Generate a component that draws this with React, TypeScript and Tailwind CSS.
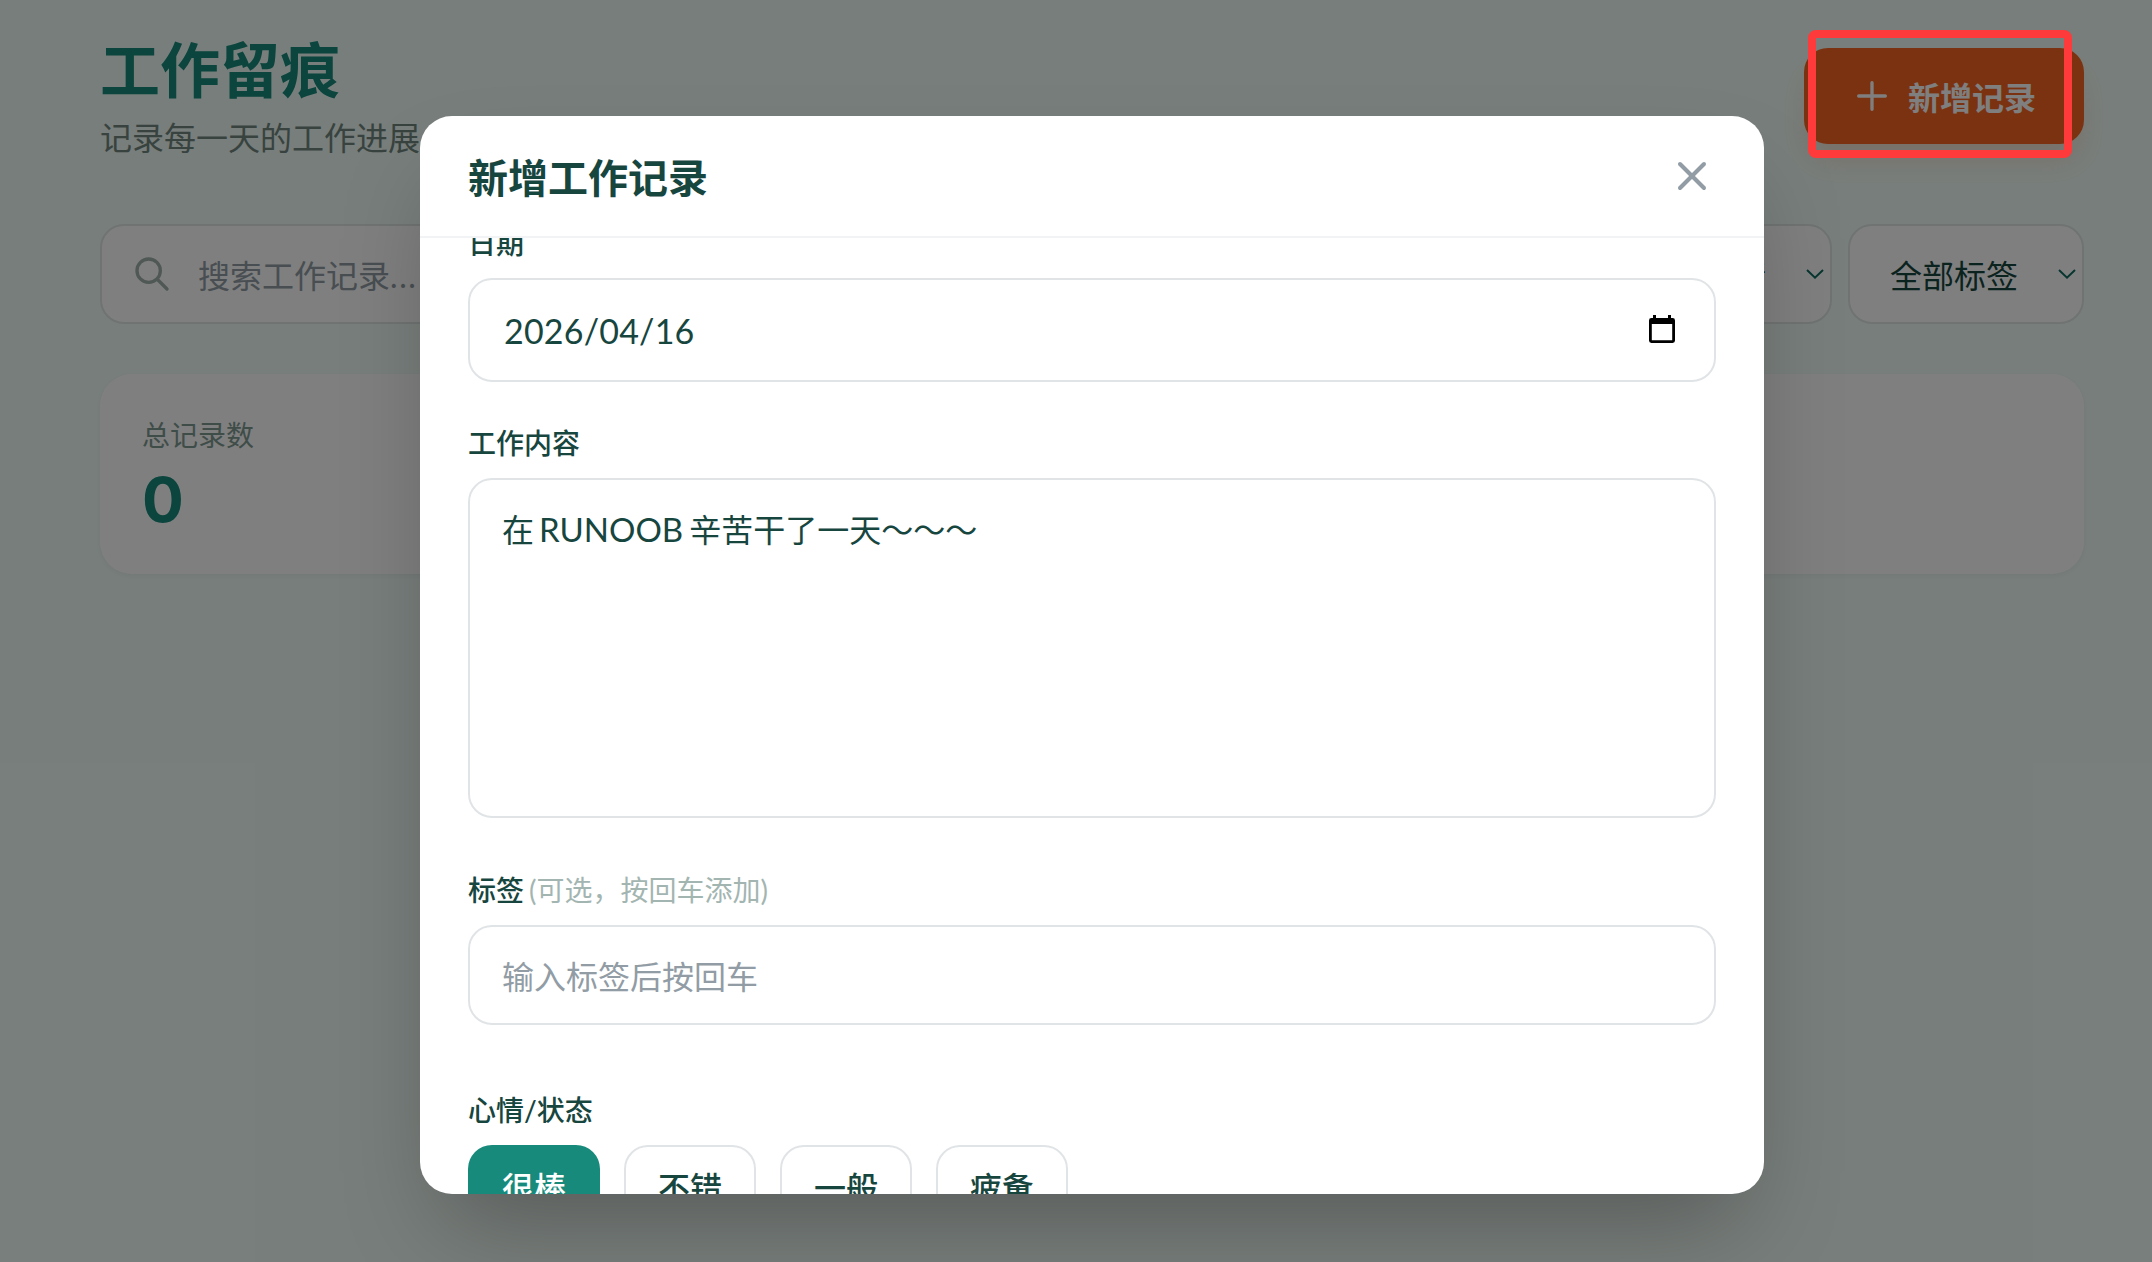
import { useState } from 'react'
import { X } from 'lucide-react'

const MOODS = ['很棒', '不错', '一般', '疲惫']
const FILTERS = ['全部心情', '全部标签']

const FIELD =
  'block w-full rounded-[24px] border-2 border-[#e1e4e6] bg-white px-8 text-[32px] text-[#17463f] outline-none placeholder:text-[#919ca5] placeholder:opacity-100'
const LABEL = 'block pt-0.5 text-[28px] leading-[38px] font-medium text-[#17463f]'

function SearchIcon() {
  return (
    <svg className="size-10 shrink-0 text-[#a0b0ac]" fill="none" viewBox="0 0 24 24" stroke="currentColor" strokeWidth="2" strokeLinecap="round" strokeLinejoin="round">
      <path d="M21 21l-6-6m2-5a7 7 0 11-14 0 7 7 0 0114 0z" />
    </svg>
  )
}

function PlusIcon() {
  return (
    <svg className="size-10 shrink-0" fill="none" viewBox="0 0 24 24" stroke="currentColor" strokeWidth="2" strokeLinecap="round">
      <path d="M12 4v16m8-8H4" />
    </svg>
  )
}

function ChevronIcon() {
  return (
    <svg className="h-[10px] w-[18px] shrink-0" fill="none" viewBox="0 0 18 10" stroke="#0f6b60" strokeWidth="2">
      <path d="M1 1l8 7.6L17 1" />
    </svg>
  )
}

function CalendarIcon() {
  return (
    <svg className="h-7 w-[26px] shrink-0" viewBox="0 0 26 28">
      <path fill="#000" fillRule="evenodd" d="M4 0h3v3h12V0h3v3h1.6A2.4 2.4 0 0126 5.4v20.2a2.4 2.4 0 01-2.4 2.4H2.4A2.4 2.4 0 010 25.6V5.4A2.4 2.4 0 012.4 3H4zM2.8 9v16.2h20.4V9z" />
    </svg>
  )
}

export default function App() {
  const [date, setDate] = useState('2026/04/16')
  const [mood, setMood] = useState('很棒')

  return (
    <div className="relative h-[1262px] w-[2152px] overflow-hidden bg-[#f0fdf7] pr-[68px] pl-[100px] font-[Lato,'Noto_Sans_CJK_SC',sans-serif]">
      <header className="flex items-start justify-between pt-[34px]">
        <div>
          <h1 className="text-[60px] leading-[72px] font-bold text-[#178a7b]">工作留痕</h1>
          <p className="mt-3 text-[32px] leading-10 text-[#70877f]">记录每一天的工作进展</p>
        </div>
        <button className="mt-[14px] flex h-24 items-center gap-4 rounded-[24px] bg-[#f76521] px-12 text-[32px] font-bold text-white shadow-[0_20px_30px_-6px_rgba(247,101,33,0.2)]">
          <PlusIcon />
          <span className="pt-[3px]">新增记录</span>
        </button>
      </header>

      <div className="mt-[66px] flex gap-4">
        <div className="flex h-[100px] flex-1 items-center gap-[26px] rounded-[24px] border-2 border-[#dfe7e4] bg-white pl-[30px]">
          <SearchIcon />
          <span className="pt-[3px] text-[32px] text-[#919ca5]">
            搜索工作记录<span className="tracking-[1.6px]">...</span>
          </span>
        </div>
        {FILTERS.map((filter) => (
          <div
            key={filter}
            className="flex h-[100px] w-[236px] items-center justify-between rounded-[24px] border-2 border-[#dfe7e4] bg-white pr-[6px] pl-10 text-[32px] text-[#17463f]"
          >
            <span className="pt-[3px]">{filter}</span>
            <ChevronIcon />
          </div>
        ))}
      </div>

      <div className="mt-[50px] h-[200px] rounded-[32px] bg-white px-[42px] pt-[41px] shadow-[0_2px_6px_rgba(0,0,0,0.05)]">
        <div className="text-[28px] leading-10 text-[#7f9a93]">总记录数</div>
        <div className="mt-[10px] font-[Inter,sans-serif] text-[62px] leading-[70px] font-bold text-[#178a7b]">0</div>
      </div>

      <div className="absolute inset-0 flex items-start justify-center bg-black/50 pt-[116px] pl-8">
        <div className="flex h-[1078px] w-[1344px] flex-col overflow-hidden rounded-[32px] bg-white shadow-[0_50px_100px_-24px_rgba(0,0,0,0.28)]">
          <div className="flex h-[122px] shrink-0 items-center justify-between border-b-2 border-[#f1f3f4] px-12">
            <h2 className="pt-[3px] text-[40px] leading-[56px] font-bold text-[#17463f]">新增工作记录</h2>
            <button className="text-[#919ca5]">
              <X className="size-12" strokeWidth={2} />
            </button>
          </div>

          <div className="min-h-0 flex-1 overflow-hidden px-12">
            <div className="-mt-4">
              <label className={LABEL}>日期</label>
              <div className={`${FIELD} mt-4 flex h-[104px] items-center justify-between`}>
                <input
                  className="w-80 pl-0.5 text-[34px] tracking-[0.2px] outline-none"
                  value={date}
                  onChange={(e) => setDate(e.target.value)}
                />
                <div className="pr-[7px] pb-[2px]">
                  <CalendarIcon />
                </div>
              </div>
            </div>

            <div className="mt-[40px]">
              <label className={LABEL}>工作内容</label>
              <div className={`${FIELD} mt-4 h-[340px] py-[25px] leading-[48px]`}>
                在<span className="pr-[6px] pl-[5px] text-[33px]">RUNOOB</span>辛苦干了一天～～～
              </div>
            </div>

            <div className="mt-[51px]">
              <label className={LABEL}>
                标签 <span className="-ml-0.5 font-normal text-[#a3b5b1]">(可选，按回车添加)</span>
              </label>
              <input className={`${FIELD} mt-4 h-[100px] pt-[2px]`} placeholder="输入标签后按回车" />
            </div>

            <div className="mt-[64px]">
              <label className={LABEL}>心情/状态</label>
              <div className="mt-4 flex gap-6">
                {MOODS.map((item) => (
                  <button
                    key={item}
                    onClick={() => setMood(item)}
                    className={`h-[84px] w-[132px] shrink-0 rounded-[24px] pt-px text-[32px] font-medium ${
                      mood === item ? 'bg-[#178a7b] text-white' : 'border-2 border-[#e1e4e6] text-[#17463f]'
                    }`}
                  >
                    {item}
                  </button>
                ))}
              </div>
            </div>
          </div>
        </div>
      </div>

      {/* highlight frame around the add button */}
      <div className="absolute top-[30px] left-[1808px] h-32 w-[264px] rounded-[8px] border-8 border-[#ff3a3a]"></div>
    </div>
  )
}
